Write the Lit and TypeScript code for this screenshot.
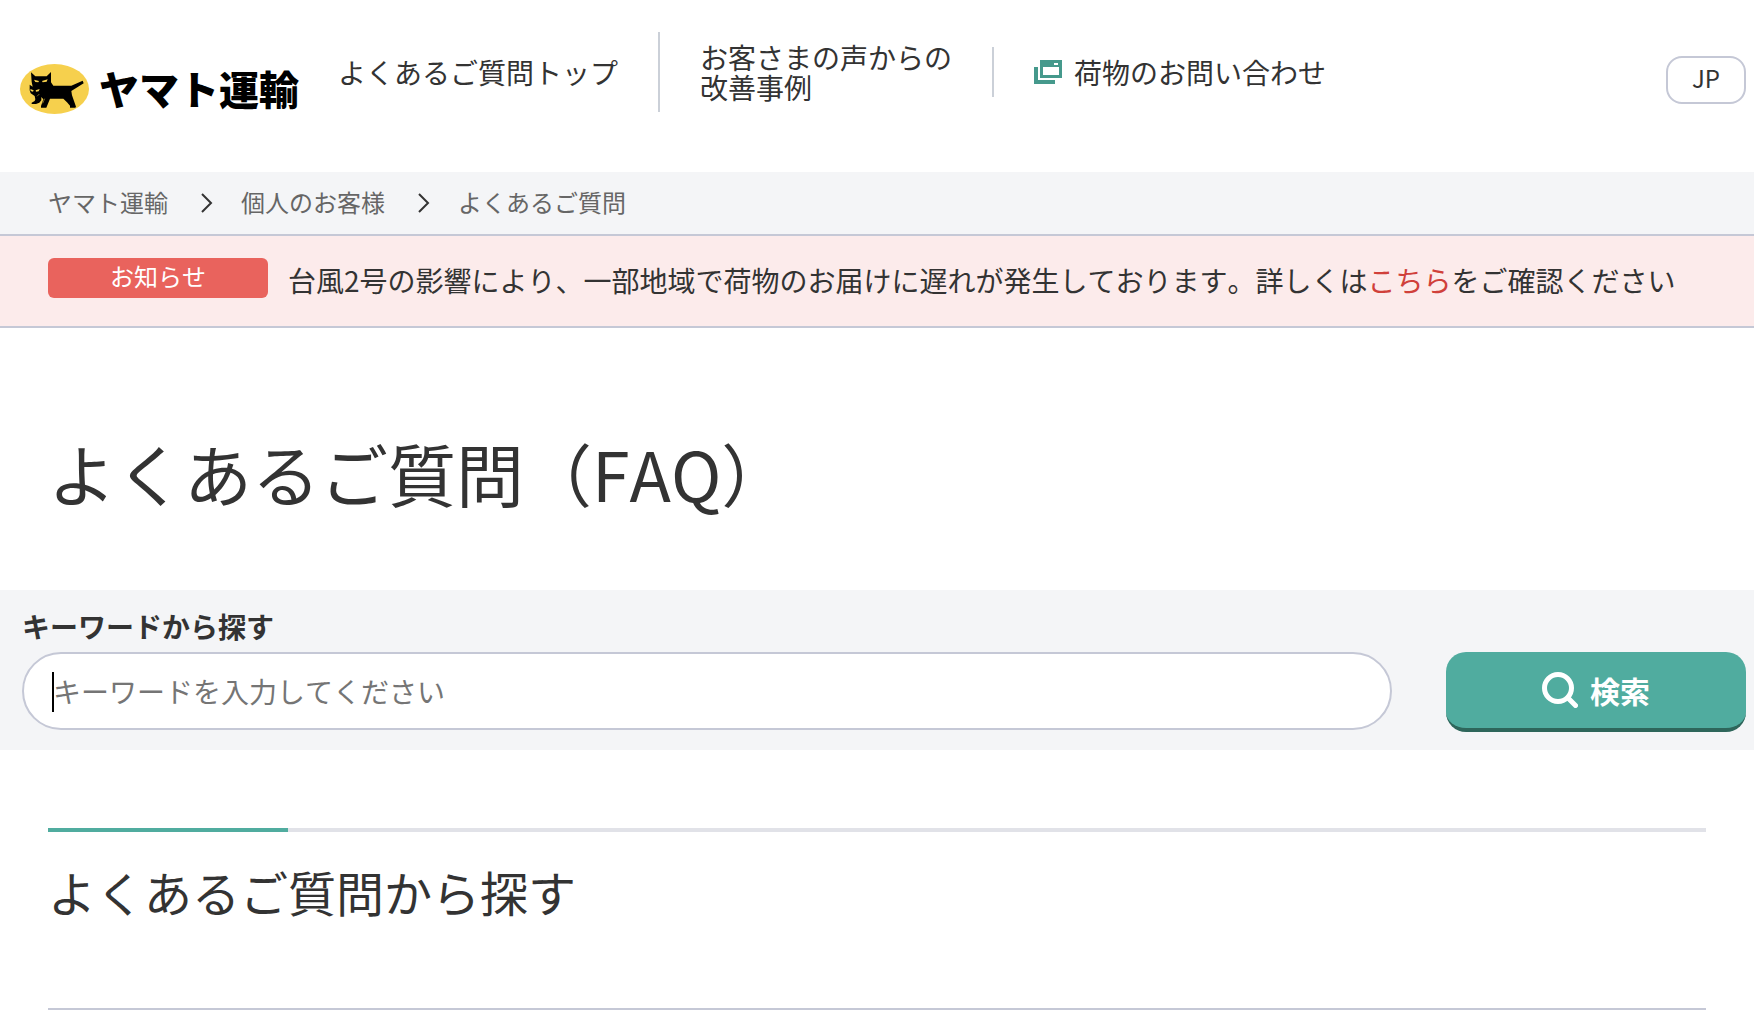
import { LitElement, html, css, svg } from "lit";
import { customElement } from "lit/decorators.js";

const catMark = svg`
  <ellipse cx="163.500" cy="147" rx="103.500" ry="75" fill="#f6d04d"></ellipse>
  <path fill="#000" d="M93 97 L106 109 H140 L153 96 V127 L160 137 H214 L248 122 L251 130 L214 153 L216 166 L228 200 L226 203 H210 V197 L201 187 L190 176 H150 L139 203 H123 V198 L130 178 L124 171 V181 L118 188 L108 192 H95 V188 L104 183 L106 178 L104 168 L92 160 L89 151 V134 L98 140 L95 126 Z"></path>
  <path fill="#f6d04d" d="M102 119 L117 123 L115 127 L106 126 Z M126 123 L143 118 L140 125 L128 127 Z M91 147 L101 151 L99 155 L92 153 Z M107 151 L119 147 L116 154 L108 155 Z"></path>
  <path fill="none" stroke="#f6d04d" stroke-width="1.500" d="M118 162 L111 169 M134 176 L128 190"></path>
`;

@customElement("app-root")
export class AppRoot extends LitElement {
  static styles = css`
    :host {
      display: block;
      min-height: 100vh;
      background: #fff;
      color: #333;
      font-family: "Noto Sans CJK JP", "Noto Sans", sans-serif;
      font-size: 28px;
      font-kerning: none;
      line-height: 30px;
    }
    * { box-sizing: border-box; }
    a { color: inherit; text-decoration: none; }
    svg { display: block; flex: none; }
    h1, h2 { margin: 0; font-weight: 400; }
    ul, ol { margin: 0; padding: 0; list-style: none; display: flex; align-items: center; }

    .header {
      display: flex;
      align-items: flex-start;
      min-height: 172px;
      padding: 32px 8px 24px 20px;
    }
    .logo {
      display: flex;
      align-items: flex-start;
      gap: 10px;
      margin-top: 32px;
      color: #000;
      font-size: 40px;
      font-weight: 900;
      line-height: 48px;
      white-space: nowrap;
    }
    .nav { margin-left: 39px; }
    .nav ul { min-height: 80px; gap: 40px; }
    .rule { width: 2px; height: 80px; background: #cbd0d8; }
    .rule.short { height: 50px; }
    .external { display: flex; align-items: center; gap: 12px; }
    .lang {
      margin: 24px 0 0 auto;
      width: 80px;
      height: 48px;
      padding: 0 0 4px;
      border: 2px solid #c5c8d6;
      border-radius: 16px;
      background: #fff;
      color: #333;
      font: inherit;
      font-size: 24px;
    }

    .crumbs {
      padding: 12px 48px 14px;
      background: #f4f5f7;
      color: #666;
      font-size: 24px;
      line-height: 36px;
    }
    .crumbs li { display: flex; align-items: center; }
    .crumbs svg { margin: 2px 28px 0 33px; }

    .notice {
      display: flex;
      align-items: flex-start;
      gap: 20px;
      padding: 22px 48px 24px;
      border: solid #c5c8d6;
      border-width: 2px 0;
      background: #fcebeb;
      line-height: 44px;
    }
    .badge {
      flex: none;
      width: 220px;
      height: 40px;
      border-radius: 6px;
      background: #e9635d;
      color: #fff;
      font-size: 24px;
      line-height: 36px;
      text-align: center;
    }
    .notice a { color: #d0403a; }

    .title {
      padding: 95px 48px 67px;
      font-size: 68px;
      line-height: 100px;
    }

    .search { padding: 16px 8px 18px 22px; background: #f4f5f7; }
    .search label { display: block; margin-bottom: 6px; font-weight: 700; line-height: 40px; }
    .row { display: flex; align-items: flex-start; gap: 54px; }
    .field { position: relative; flex: 1; }
    .field input {
      display: block;
      width: 100%;
      height: 78px;
      padding: 0 29px;
      border: 2px solid #c5c8d6;
      border-radius: 39px;
      background: #fff;
      color: #333;
      font: inherit;
      outline: none;
    }
    .field input::placeholder { color: #757575; opacity: 1; }
    .caret {
      position: absolute;
      left: 30px;
      top: 20px;
      width: 2px;
      height: 40px;
      background: #000;
    }
    .submit {
      display: flex;
      align-items: center;
      justify-content: center;
      gap: 12px;
      width: 300px;
      height: 80px;
      padding: 0;
      border: 0;
      border-bottom: 4px solid #2e665b;
      border-radius: 20px;
      background: #50ac9f;
      color: #fff;
      font: inherit;
      font-size: 30px;
      font-weight: 700;
    }

    .faq { margin: 78px 48px 0; padding-bottom: 82px; border-bottom: 2px solid #c5c8d6; }
    .bar { height: 4px; background: #e1e2e8; }
    .bar::before { content: ""; display: block; width: 240px; height: 4px; background: #50ac9f; }
    .faq h2 { padding-top: 24px; font-size: 48px; line-height: 70px; }
  `;

  private chevron() {
    return html`<svg width="12" height="20" viewBox="0 0 12 20" fill="none" stroke="#333" stroke-width="2" aria-hidden="true">
      <path d="M1 1 L10 10 L1 19"></path>
    </svg>`;
  }

  render() {
    return html`
      <header class="header">
        <a class="logo" href="#">
          <svg width="69" height="50" viewBox="60 72 207 150" aria-hidden="true">${catMark}</svg>
          <span>ヤマト運輸</span>
        </a>
        <nav class="nav">
          <ul>
            <li><a href="#">よくあるご質問トップ</a></li>
            <li class="rule" role="presentation"></li>
            <li><a href="#">お客さまの声からの<br />改善事例</a></li>
            <li class="rule short" role="presentation"></li>
            <li>
              <a class="external" href="#">
                <svg width="28" height="26" viewBox="0 0 28 26" fill="#45998c" aria-hidden="true">
                  <path fill-rule="evenodd" d="M6 1 H28 V19 H6 Z M9 8 V16 H25 V8 Z M20 4 V6 H24 V4 Z"></path>
                  <path d="M0 8 H4 V21 H21 V25 H0 Z"></path>
                </svg>
                <span>荷物のお問い合わせ</span>
              </a>
            </li>
          </ul>
        </nav>
        <button class="lang" type="button">JP</button>
      </header>

      <nav class="crumbs">
        <ol>
          <li><a href="#">ヤマト運輸</a>${this.chevron()}</li>
          <li><a href="#">個人のお客様</a>${this.chevron()}</li>
          <li>よくあるご質問</li>
        </ol>
      </nav>

      <section class="notice">
        <span class="badge">お知らせ</span>
        <span>台風2号の影響により、一部地域で荷物のお届けに遅れが発生しております。詳しくは<a href="#">こちら</a>をご確認ください</span>
      </section>

      <main>
        <h1 class="title">よくあるご質問（FAQ）</h1>

        <form class="search" @submit=${(e: Event) => e.preventDefault()}>
          <label for="keyword">キーワードから探す</label>
          <div class="row">
            <div class="field">
              <input id="keyword" type="text" placeholder="キーワードを入力してください" />
              <span class="caret" aria-hidden="true"></span>
            </div>
            <button class="submit" type="submit">
              <svg width="36" height="36" viewBox="0 0 36 36" fill="none" stroke="#fff" aria-hidden="true">
                <circle cx="16" cy="16" r="13.500" stroke-width="5"></circle>
                <path d="M26 26 L33.500 33.500" stroke-width="5" stroke-linecap="round"></path>
              </svg>
              <span>検索</span>
            </button>
          </div>
        </form>

        <section class="faq">
          <div class="bar"></div>
          <h2>よくあるご質問から探す</h2>
        </section>
      </main>
    `;
  }
}
